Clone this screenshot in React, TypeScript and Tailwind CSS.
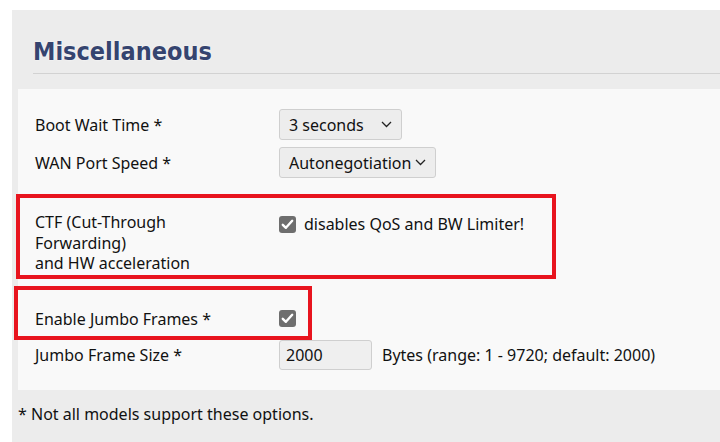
import React from "react";

const Chevron: React.FC = () => (
  <svg width="11" height="7" viewBox="0 0 11 7" fill="none" className="ml-auto shrink-0">
    <path d="M1 1 L5.5 5.5 L10 1" stroke="#222" strokeWidth="1.3" />
  </svg>
);

const CheckBox: React.FC = () => (
  <span className="flex h-[17px] w-[17px] shrink-0 items-center justify-center rounded-[3px] bg-[#6e6e6e]">
    <svg width="13" height="11" viewBox="0 0 13 11" fill="none">
      <path d="M1.8 5.8 L4.9 8.8 L11.2 1.8" stroke="#fff" strokeWidth="2.4" strokeLinecap="round" strokeLinejoin="round" />
    </svg>
  </span>
);

interface SelectBoxProps {
  value: string;
  width: string;
}

const SelectBox: React.FC<SelectBoxProps> = ({ value, width }) => (
  <div
    className={`flex h-[31px] items-center rounded-[3px] border border-[#cfcfcf] bg-[#ededed] pl-[9px] pr-[9px] ${width}`}
  >
    <span className="whitespace-nowrap">{value}</span>
    <Chevron />
  </div>
);

export default function App() {
  return (
    <div className="min-h-[442px] bg-white pl-[12px] pt-[10px] font-['Noto_Sans',sans-serif] text-[16px] text-[#111]">
      <div className="min-h-[432px] bg-[#ececec] pb-[20px]">
        <div className="pl-[21px] pt-[26px]">
          <h2 className="border-b border-[#d2d2d2] pb-[6px] font-['DejaVu_Sans_Condensed','DejaVu_Sans',sans-serif] text-[25px] leading-[31px] font-bold text-[#35446f] [text-shadow:0_0_2px_#fff]">
            Miscellaneous
          </h2>
        </div>

        <div className="relative ml-[6px] mt-[15px] bg-[#f9f9f9] pb-[20px] pl-[17px] pt-[20px]">
          <div className="flex h-[31px] items-center">
            <div className="w-[244px]">Boot Wait Time *</div>
            <SelectBox value="3 seconds" width="w-[123px]" />
          </div>
          <div className="mt-[7px] flex h-[31px] items-center">
            <div className="w-[244px]">WAN Port Speed *</div>
            <SelectBox value="Autonegotiation" width="w-[157px]" />
          </div>

          <div className="mt-[34px] flex items-start leading-[20.5px]">
            <div className="w-[244px]">
              CTF (Cut-Through
              <br />
              Forwarding)
              <br />
              and HW acceleration
            </div>
            <div className="flex items-center gap-[8px] pt-[2px]">
              <CheckBox />
              <span>disables QoS and BW Limiter!</span>
            </div>
          </div>

          <div className="mt-[35px] flex h-[20px] items-center">
            <div className="w-[244px]">Enable Jumbo Frames *</div>
            <CheckBox />
          </div>

          <div className="mt-[11px] flex h-[30px] items-center">
            <div className="w-[244px]">Jumbo Frame Size *</div>
            <div className="flex h-[30px] w-[93px] items-center rounded-[3px] border border-[#cfcfcf] bg-[#efefef] pl-[6px]">
              2000
            </div>
            <span className="ml-[10px]">Bytes (range: 1 - 9720; default: 2000)</span>
          </div>

          {/* annotation boxes drawn over the form */}
          <div className="pointer-events-none absolute left-[-2px] top-[105px] h-[85px] w-[540px] border-[4px] border-[#e8141e]" />
          <div className="pointer-events-none absolute left-[-4px] top-[197px] h-[54px] w-[298px] border-[4px] border-[#e8141e]" />
        </div>

        <div className="ml-[6px] mt-[14px] leading-[20px]">* Not all models support these options.</div>
      </div>
    </div>
  );
}
